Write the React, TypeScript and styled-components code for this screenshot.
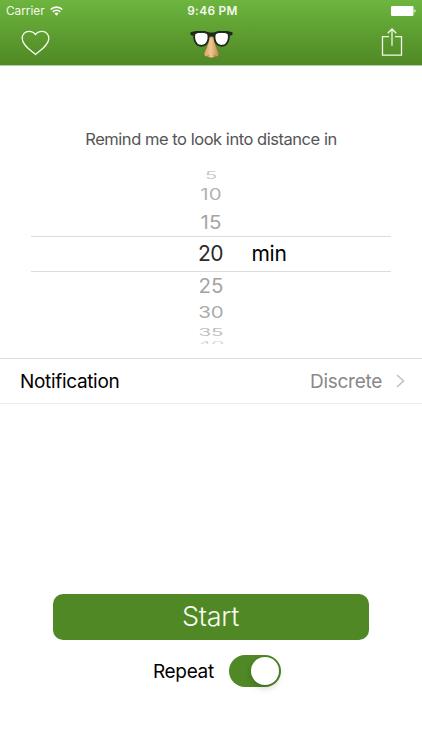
import React from "react";
import styled, { createGlobalStyle } from "styled-components";

const GlobalStyle = createGlobalStyle`
  * { box-sizing: border-box; }
  body { margin: 0; background: #fff; font-family: Inter, "Liberation Sans", sans-serif; }
`;

const Screen = styled.main`
  width: 422px;
  height: 750px;
  overflow: hidden;
  display: flex;
  flex-direction: column;
  background: #fff;
`;

const Header = styled.header`
  height: 66px;
  flex: none;
  background: linear-gradient(#6db53f, #4f8824);
  border-bottom: 1px solid #b4cba3;
`;

const StatusBar = styled.div`
  height: 22px;
  display: grid;
  grid-template-columns: 1fr auto 1fr;
  align-items: center;
  padding: 0 6px;
  color: #f4faee;
  font-size: 12px;
  line-height: 22px;
`;

const Carrier = styled.div`
  display: flex;
  align-items: center;
  gap: 5px;
  font-size: 11.8px;
`;

const Clock = styled.div`
  font-weight: 600;
  font-size: 11.8px;
  letter-spacing: 0.35px;
  padding-left: 3px;
`;

const Battery = styled.svg`
  justify-self: end;
`;

const NavBar = styled.nav`
  height: 43px;
  display: grid;
  grid-template-columns: 1fr auto 1fr;
  padding: 0 19px 0 21px;
`;

const NavButton = styled.button<{ $end?: boolean; $top: number }>`
  border: 0;
  background: none;
  padding: ${(p) => p.$top}px 0 0;
  justify-self: ${(p) => (p.$end ? "end" : "start")};
  align-self: start;
  display: flex;
`;

const Logo = styled.svg`
  margin: 7px 2px 0 0;
`;

const Prompt = styled.p`
  margin: 61px 0 0;
  height: 24px;
  line-height: 24px;
  text-align: center;
  font-size: 16.5px;
  letter-spacing: -0.46px;
  color: #555;
`;

const Picker = styled.section`
  height: 207px;
  padding: 16px 31px 0;
`;

const Option = styled.div<{ $h: number; $size: number; $squash: number; $color: string; $clip?: number }>`
  height: ${(p) => p.$h}px;
  display: grid;
  grid-template-columns: 360px;
  align-items: center;
  justify-items: center;
  font-size: ${(p) => p.$size}px;
  color: ${(p) => p.$color};
  ${(p) => (p.$clip ? `clip-path: inset(0 0 ${p.$clip}px 0);` : "")}

  span {
    line-height: 20px;
    margin: -8px 0;
    transform: scaleY(${(p) => p.$squash});
  }
`;

const Selected = styled.div`
  height: 36px;
  display: grid;
  grid-template-columns: 167px 26px 27.5px auto;
  align-items: center;
  border-top: 1px solid #dcdcdc;
  border-bottom: 1px solid #dcdcdc;
  font-size: 21px;
  line-height: 34px;
  letter-spacing: -0.5px;
  color: #2b2b2b;
`;

const Unit = styled.span`
  grid-column: 4;
  color: #000;
  letter-spacing: -0.3px;
`;

const SettingRow = styled.div`
  height: 46px;
  flex: none;
  display: flex;
  align-items: center;
  padding: 0 17px 0 20px;
  border-top: 1px solid #dedede;
  border-bottom: 1px solid #ececec;
  font-size: 19px;
`;

const SettingName = styled.span`
  color: #000;
  letter-spacing: -0.33px;
`;

const SettingValue = styled.span`
  margin-left: auto;
  margin-right: 14px;
  color: #888;
  letter-spacing: -0.28px;
`;

const StartButton = styled.button`
  margin: 190px 53px 0;
  height: 46px;
  flex: none;
  border: 0;
  border-radius: 10px;
  background: #4f8824;
  color: #f7fbf3;
  font: 300 27px/46px Inter, sans-serif;
  letter-spacing: -0.3px;
  padding: 0 1px 0 0;
`;

const RepeatRow = styled.div`
  margin-top: 15px;
  height: 32px;
  padding-left: 153px;
  display: flex;
  align-items: center;
  gap: 15px;
  font-size: 19px;
  letter-spacing: -0.33px;
  color: #000;
`;

const Switch = styled.div`
  width: 52px;
  height: 32px;
  border-radius: 16px;
  background: #4f8824;
  display: flex;
  justify-content: flex-end;
  padding: 2px;
`;

const Knob = styled.div`
  width: 28px;
  height: 28px;
  border-radius: 50%;
  background: #fff;
  box-shadow: 0 3px 6px rgba(0, 0, 0, 0.2);
`;

type Row = { value: number; h: number; size: number; squash: number; color: string; clip?: number };

const before: Row[] = [
  { value: 5, h: 15, size: 20, squash: 0.5, color: "#c9c9c9" },
  { value: 10, h: 25, size: 20.5, squash: 0.75, color: "#b2b2b2" },
  { value: 15, h: 29, size: 20.5, squash: 0.93, color: "#a5a5a5" },
];

const after: Row[] = [
  { value: 25, h: 27, size: 20.5, squash: 0.95, color: "#a3a3a3" },
  { value: 30, h: 27, size: 20.5, squash: 0.77, color: "#aaa" },
  { value: 35, h: 13, size: 20.5, squash: 0.47, color: "#bebebe" },
  { value: 40, h: 9, size: 20.5, squash: 0.3, color: "#d8d8d8", clip: 4 },
];

const renderOption = (row: Row) => (
  <Option key={row.value} $h={row.h} $size={row.size} $squash={row.squash} $color={row.color} $clip={row.clip}>
    <span>{row.value}</span>
  </Option>
);

export default function App() {
  return (
    <Screen>
      <GlobalStyle />
      <Header>
        <StatusBar>
          <Carrier>
            <span>Carrier</span>
            <svg width="13" height="10" viewBox="0 0 13 10" fill="none" stroke="#fff" strokeWidth="1.7">
              <path d="M.7 3.5a8.3 8.3 0 0 1 11.6 0M2.8 5.8a5.2 5.2 0 0 1 7.4 0" />
              <path d="M6.5 9.7 4.5 7.5a2.8 2.8 0 0 1 4 0z" fill="#fff" stroke="none" />
            </svg>
          </Carrier>
          <Clock>9:46 PM</Clock>
          <Battery width="25" height="10" viewBox="0 0 25 10">
            <rect x="0" y="0" width="22.5" height="10" rx="1.2" fill="#fff" />
            <path d="M23.3 3.3q1.4.3 1.4 1.7t-1.4 1.7z" fill="#e6f2dd" />
          </Battery>
        </StatusBar>
        <NavBar>
          <NavButton $top={8} aria-label="Favourite">
            <svg width="29" height="26" viewBox="0 0 29 26" fill="none" stroke="#f5ffec" strokeWidth="1.3" strokeLinejoin="round">
              <path d="M14.5 24.5C10 20.5 1.2 15.5 1.2 8.6 1.2 4.4 4 1.4 7.8 1.4c3 0 5.5 1.2 6.7 3.3 1.2-2.1 3.700-3.300 6.700-3.300 3.800 0 6.600 3 6.600 7.200 0 6.900-8.800 11.900-13.300 15.900z" />
            </svg>
          </NavButton>
          <Logo width="44" height="32" viewBox="0 0 44 32">
            <defs>
              <linearGradient id="nose" x1="0" x2="1">
                <stop offset="0" stopColor="#d5a268" />
                <stop offset=".45" stopColor="#f0c88f" />
                <stop offset="1" stopColor="#b98750" />
              </linearGradient>
            </defs>
            <path d="M20 8c-.3 6-2.400 10.500-4.300 14.500-1.700 3.500 0 5.700 2.900 5.100 2 1.900 5.800 1.900 7.800 0 2.900.6 4.600-1.600 2.900-5.100C27.400 18.500 25.300 14 25 8z" fill="url(#nose)" stroke="#7d6a30" strokeWidth=".6" />
            <path d="M18.300 27q1-1.500 2.300 0M24.400 27q1.100-1.500 2.200 0" fill="none" stroke="#a37740" strokeWidth=".8" />
            <path d="M5.500 4.500C9 2.500 15.500 2.500 18.900 4.300c1.400 3.500.6 8.700-2.400 11.200-2.600 1.900-6.800 1.700-8.900-.7C5.400 12.300 4.900 7.800 5.500 4.500zM39.500 4.500C36 2.500 29.500 2.500 26.100 4.300c-1.400 3.500-.6 8.700 2.400 11.200 2.600 1.900 6.800 1.700 8.900-.7 2.200-2.500 2.700-7 2.100-10.300z" fill="#fff" stroke="#20291c" strokeWidth="1.800" />
            <path d="M1.500 3.200C7 1.400 14 1.600 19.300 3.200q3.200.8 6.400 0C31 1.600 38 1.400 43.500 3.200v2.500l-2.700 1.300-.9-2.200q-7-1.900-13.100-.1L25.300 8q-2.800-1.500-5.600 0l-1.500-3.300q-6.100-1.800-13.100.1L4.200 7 1.500 5.700z" fill="#20291c" />
          </Logo>
          <NavButton $end $top={6} aria-label="Share">
            <svg width="22" height="28" viewBox="0 0 22 28" fill="none" stroke="#eff9e6" strokeWidth="1.3">
              <path d="M8 8.700H1.500v18.500h19V8.700H14M11 17.700V1M6.700 5.200 11 1l4.300 4.200" />
            </svg>
          </NavButton>
        </NavBar>
      </Header>
      <Prompt>Remind me to look into distance in</Prompt>
      <Picker>
        {before.map(renderOption)}
        <Selected>
          <span />
          <span>20</span>
          <Unit>min</Unit>
        </Selected>
        {after.map(renderOption)}
      </Picker>
      <SettingRow>
        <SettingName>Notification</SettingName>
        <SettingValue>Discrete</SettingValue>
        <svg width="9" height="14" viewBox="0 0 9 14" fill="none" stroke="#c4c4c8" strokeWidth="1.7">
          <path d="m1 1 6.500 6L1 13" />
        </svg>
      </SettingRow>
      <StartButton>Start</StartButton>
      <RepeatRow>
        <span>Repeat</span>
        <Switch role="switch" aria-checked="true">
          <Knob />
        </Switch>
      </RepeatRow>
    </Screen>
  );
}
